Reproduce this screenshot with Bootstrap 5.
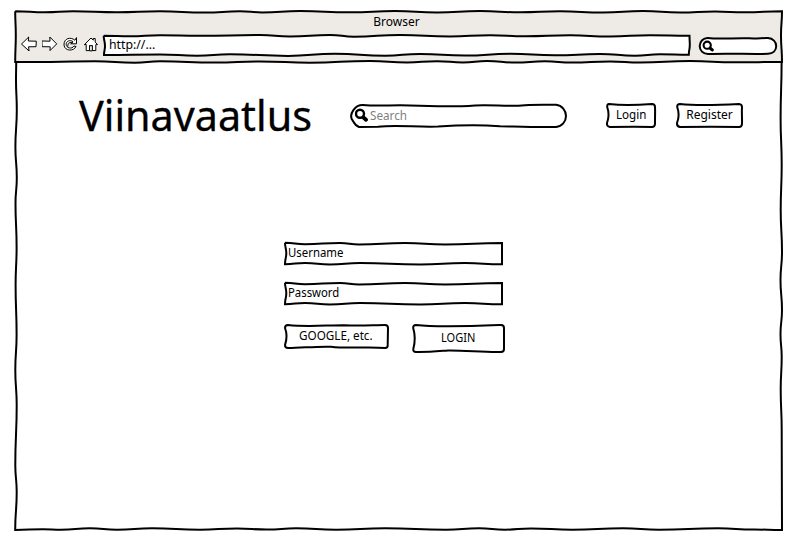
<!DOCTYPE html>
<html lang="et">
<head>
<meta charset="utf-8">
<meta name="viewport" content="width=device-width, initial-scale=1">
<title>Viinavaatlus</title>
<link href="https://cdn.jsdelivr.net/npm/bootstrap@5.3.0/dist/css/bootstrap.min.css" rel="stylesheet">
<style>
  body { font-family: "Noto Sans", "Open Sans", sans-serif; font-size: 12px; line-height: 16px; color: #000; background: #fff; }
  .browser-window { width: 768px; height: 520px; margin: 11px 0 0 15px; }
  .browser-head { height: 51px; }
  .sketch { position: absolute; left: 0; top: 0; width: 100%; height: 100%; overflow: visible; fill: #fff; stroke: #000; stroke-width: 2; stroke-linejoin: miter; z-index: -1; pointer-events: none; }
  .head-fill { fill: #eeebe7; }
  .browser-window, .sketched { position: relative; z-index: 0; }
  .window-title { height: 20px; padding-top: 3px; padding-right: 5px; }
  .fit { display: inline-block; white-space: nowrap; transform-origin: 0 50%; }
  .tool-row { height: 22px; margin-top: 3px; padding-left: 6px; }
  .tool-icons { gap: 3.6px; }
  .tool-icon { width: 17px; height: 16px; margin-top: 2px; fill: #fff; stroke: #000; stroke-width: 1; stroke-linejoin: round; stroke-linecap: round; }
  .url-box { width: 587px; height: 22px; padding: 3px 0 0 6px; margin-left: 3.2px; }
  .mini-search { width: 78px; height: 18px; margin-left: 9px; margin-top: 3px; padding: 3px 0 0 3px; }
  .site-bar { height: 66px; margin-top: 20px; padding-left: 64px; }
  .site-title { width: 271px; font-size: 42px; line-height: 65px; font-weight: 400; -webkit-text-stroke: .3px #000; }
  .site-search { width: 218px; height: 25px; margin-top: 21px; padding: 5px 0 0 5px; color: #808080; }
  .search-label { margin-left: 1px; }
  .login-btn, .register-btn, .google-btn, .submit-btn { border: 0; padding: 0 0 2px; background: none; font: inherit; color: inherit; border-radius: 0; }
  .login-btn { width: 51px; height: 25px; margin: 21px 0 0 38px; }
  .register-btn { width: 68px; height: 25px; margin: 21px 0 0 19px; padding-right: 1px; }
  .sign-in { width: 222px; margin: 93px 0 0 269px; }
  .entry { width: 219px; height: 24px; padding: 4px 0 0 4px; margin-bottom: 16px; }
  .google-btn { width: 105px; height: 26px; margin-top: 3px; padding-right: 2px; }
  .submit-btn { width: 94px; height: 30px; margin-top: 3px; padding-right: 2px; }
</style>
<script src="https://cdn.jsdelivr.net/npm/bootstrap@5.3.0/dist/js/bootstrap.bundle.min.js"></script>
</head>
<body>
<main class="browser-window">
  <svg class="sketch" viewBox="15 11 768 520" aria-hidden="true">
    <path data-wave="v 16.2,62 16,80 16.8,110 15.4,147 16.8,178 15.5,203 16.6,247 15.6,285 16.6,335 15.3,370 16.7,405 15.3,465 16.7,492 15.2,530|h 15.2,530 43,529.2 61,529.7 90,528.3 117,529.7 152,528.3 200,529.7 237,528.5 267,529.5 296,528.3 336,529.7 385,528.3 446,529.7 479,528.3 505,529.7 531,528.5 572,529.7 623,528.3 659,529.7 718,528.3 754,529.5 782,530|v 782,530 781.7,430 780.7,389 781.7,357 780.5,334 782,310 780.5,280 782,252 780.7,210 781.7,165 780.6,118 781.6,62"/>
    <path class="head-fill" data-wave="h 15.2,11.2 45,12.3 73,11.3 117,12.3 160,11.3 205,12.5 240,11.3 262,12.4 300,11 350,12.3 395,11 437,12.4 480,11 520,12.3 560,11.3 603,12.6 643,11 680,12.5 715,11.5 745,12.3 782,11.2|v 782,11.2 781,35 782,62|h 782,62 735,62.3 690,61 640,62.5 610,61.5 572,62.5 545,61.3 515,62.5 487,61 463,62.5 437,61.2 407,62.5 370,61 310,62.7 260,61.5 215,62.5 160,61.3 135,62.7 95,61.2 50,62 15.2,62|v 15.2,62 15.8,35 15.2,11.2"/>
  </svg>

  <header class="browser-head">
    <div class="window-title text-center"><span class="fit" data-width="46">Browser</span></div>
    <div class="tool-row d-flex">
      <div class="tool-icons d-flex">
        <svg class="tool-icon" viewBox="21 37 17 16"><path d="M21.8 44.8L28.7 38L28.3 42L36.3 42.2L36 47.7L28.5 47.8L29 51.6Z"/></svg>
        <svg class="tool-icon" viewBox="42 37 17 16"><path d="M42.3 42L50 42.2L49.8 38L56.7 44.9L50 51.6L50.2 47.8L42.5 47.7Z"/></svg>
        <svg class="tool-icon" viewBox="62 36.5 17 16"><path d="M76.5 38.5V44.3H70.7L73.1 42.2C70.1 39.9 66.1 41.6 66.1 44.8C66.2 48.5 71.8 50.2 74 46.5L76 47C73.7 52.1 64.6 51.8 64 45.5C63.7 38.8 70.6 36.9 74.6 40.5Z"/><path d="M67.8 46.6C67.5 43.3 70.5 42.2 72.4 43.2" fill="none"/></svg>
        <svg class="tool-icon" viewBox="83 36.5 17 16"><path d="M84.6 45L91 38.5L93.2 40.7V39H95.2V42.6L97.5 45L95.8 45.2V51.1L92.3 51V46.2H89.5V51L86.2 51.2V45.3Z"/><path d="M89.6 51V46.2H92.3V51Z"/></svg>
      </div>
      <div class="url-box sketched">
        <svg class="sketch" viewBox="103 34 587 22" aria-hidden="true"><path data-wave="h 103.7,35.7 130,36.3 160,35.2 200,35.8 260,35 290,36.5 330,35 354,36.7 400,35 450,36.5 490,35.2 525,36.3 570,35.3 610,36.5 650,35.2 689.5,35.7|v 689.5,35.7 689.8,45 688.8,54.8|h 688.8,54.8 660,54.3 635,55.7 600,54 555,55.3 510,53.8 465,55.5 420,54 385,55.7 335,53.8 288,55.9 230,54.3 197,55.7 160,54.5 104,54.9|v 104,54.9 105,46 103.7,35.7"/></svg>
        <span class="fit" data-width="46">http://...</span>
      </div>
      <div class="mini-search sketched">
        <svg class="sketch" viewBox="699 37 78 18" aria-hidden="true"><path d="M708 38C720 39.5 735 37.7 749 38.3C757 38.8 763 37.8 768 38.1C773 38.4 776.2 42 776.2 46C776.2 50.5 773 53.6 768 53.8C752 54.4 729 53.2 708 54C703 54 699.7 50.3 699.7 46C699.7 41.5 703.3 37.8 708 38Z"/></svg>
        <svg width="12" height="12" viewBox="702 40 12 12" class="d-block" fill="#fff" stroke="#000" stroke-linecap="round"><circle cx="707.2" cy="45.2" r="3.6" stroke-width="2.1"/><path d="M710.2 48.2L712.2 49.9" stroke-width="3.2"/></svg>
      </div>
    </div>
  </header>

  <section class="site-bar d-flex">
    <h1 class="site-title mb-0"><span class="fit" data-width="233">Viinavaatlus</span></h1>
    <div class="site-search sketched d-flex">
      <svg class="sketch" viewBox="350 103 218 25" aria-hidden="true"><path d="M363 105C379 106.5 393 104.7 410 105.5C430 106.3 453 107 475 105.4C494 104.5 507 106.8 525 105.2C537 104.4 546 104.8 556 104.8C562 105.5 566 110.5 566 116C566 121.5 562 126.4 556 127C537 127.5 516 126.6 500 126.3C478 124.7 459 125.2 438 126.6C417 127.5 396 124.5 378 126.8L359 127C354 125 353.5 121 351.7 119C349.5 113.5 355 104.7 363 105Z"/></svg>
      <svg width="14" height="14" viewBox="355 108.5 14 14" fill="#fff" stroke="#000" stroke-linecap="round"><circle cx="360" cy="114.3" r="4" stroke-width="2.4"/><path d="M363.5 118L366 120.2" stroke-width="3.8"/></svg>
      <span class="fit search-label" data-width="37">Search</span>
    </div>
    <button class="login-btn sketched" type="button">
      <svg class="sketch" viewBox="606 103 51 25" aria-hidden="true"><path d="M609 104C622 105.7 640 105 652 104Q655 104.2 655 107C655.4 113 654.8 119 655 124Q654.8 127 652 127C639 126.6 622 126.8 610 127Q606.5 126.4 607 123C608.8 118 609 112 607.2 107Q607 104 609 104Z"/></svg>
      <span class="fit" data-width="30">Login</span>
    </button>
    <button class="register-btn sketched" type="button">
      <svg class="sketch" viewBox="676 103 68 25" aria-hidden="true"><path d="M680 104C697 105.8 719 105 739 104Q742 104.3 742 107C741.5 113 742.3 119 742 124Q741.8 127 739 127C720 126.6 698 126.7 680 127Q676.7 126.4 677 123C679 118 679 112 677.2 107Q677 104 680 104Z"/></svg>
      <span class="fit" data-width="47">Register</span>
    </button>
  </section>

  <form class="sign-in">
    <div class="entry sketched">
      <svg class="sketch" viewBox="284 241 219 24" aria-hidden="true"><path data-wave="h 285,242.8 305,244.3 340,242.9 359,244.5 405,243 445,244.4 502,243|v 502,243 502,264.3|h 502,264.3 465,263 420,264.4 360,263 330,264.5 305,263 285,264.2|v 285,264.2 286.3,253 285,242.8"/></svg>
      <span class="fit" data-width="55">Username</span>
    </div>
    <div class="entry sketched">
      <svg class="sketch" viewBox="284 281 219 24" aria-hidden="true"><path data-wave="h 285,282.8 305,284.3 340,282.9 359,284.5 405,283 445,284.4 502,283|v 502,283 502,304.3|h 502,304.3 465,303 420,304.4 360,303 330,304.5 305,303 285,304.2|v 285,304.2 286.3,293 285,282.8"/></svg>
      <span class="fit" data-width="51">Password</span>
    </div>
    <div class="d-flex justify-content-between align-items-start">
      <button class="google-btn sketched" type="button">
        <svg class="sketch" viewBox="284 324 105 26" aria-hidden="true"><path d="M288 325C306 327 325 325.3 344 325.2C360 326 374 325 385 325Q388 325 388 328L387.7 345Q388 348 385 348C367 346.2 350 349 331 346.7C315 346.2 302 348 288 348Q285 348 285 345C287 339 287 333 285 328Q285 325 288 325Z"/></svg>
        <span class="fit" data-width="74">GOOGLE, etc.</span>
      </button>
      <button class="submit-btn sketched" type="button">
        <svg class="sketch" viewBox="412 324 94 30" aria-hidden="true"><path d="M416 325C438 327.5 475 326 501 325Q504 325 504 328L504 349Q504 352 501 352C484 352.5 466 350.3 448 350.5C435 351.5 427 352.3 416 352Q413 352 413.3 349C415.5 341 415 334 413.2 328Q413 325 416 325Z"/></svg>
        <span class="fit" data-width="34">LOGIN</span>
      </button>
    </div>
  </form>
</main>
<script>
  // Builds hand-drawn outlines: each side eases through its points along its main axis.
  document.querySelectorAll('[data-wave]').forEach(function (path) {
    var d = '';
    path.dataset.wave.split('|').forEach(function (side) {
      var parts = side.trim().split(' ');
      var axis = parts.shift();
      var pts = parts.map(function (p) { return p.split(',').map(Number); });
      if (!d) d = 'M' + pts[0];
      for (var i = 1; i < pts.length; i++) {
        var a = pts[i - 1], b = pts[i], mx = (a[0] + b[0]) / 2, my = (a[1] + b[1]) / 2;
        d += axis === 'h' ? 'C' + [mx, a[1], mx, b[1], b[0], b[1]] : 'C' + [a[0], my, b[0], my, b[0], b[1]];
      }
    });
    path.setAttribute('d', d);
  });
  // Condenses each label to its set width.
  document.querySelectorAll('.fit').forEach(function (label) {
    var natural = label.offsetWidth, wanted = Number(label.dataset.width);
    label.style.transform = 'scaleX(' + wanted / natural + ')';
    label.style.marginRight = (wanted - natural) + 'px';
  });
</script>
</body>
</html>
